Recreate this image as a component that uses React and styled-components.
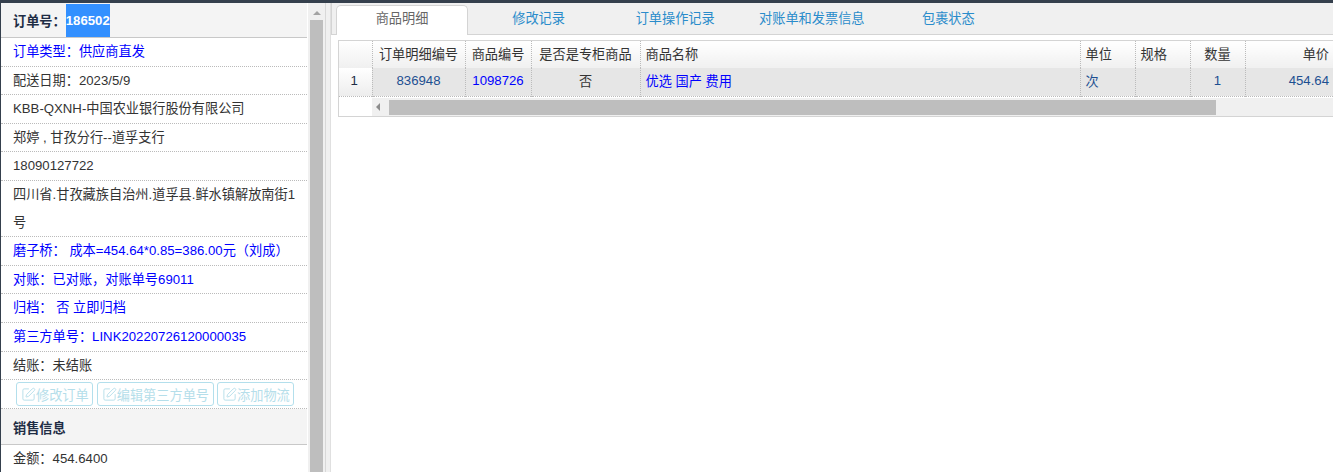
import React from "react";
import styled, { createGlobalStyle } from "styled-components";
import { SquarePen } from "lucide-react";

const Global = createGlobalStyle`
  html, body { margin: 0; padding: 0; background: #fff; }
  body { font-family: "Liberation Sans", "Noto Sans CJK SC", sans-serif; font-size: 13.2px; color: #333; }
  * { box-sizing: border-box; }
`;

const Page = styled.div`
  width: 1333px;
  height: 472px;
  display: flex;
  flex-direction: column;
  overflow: hidden;
  background: #fff;
`;
const TopStrip = styled.div`
  flex: none;
  height: 3px;
  background: #35404d;
`;
const Main = styled.div`
  flex: 1;
  display: flex;
  min-height: 0;
  border-left: 1px solid #35404d;
`;
const InfoPanel = styled.div`
  flex: none;
  width: 306px;
  overflow: hidden;
  background: #fff;
`;
const SectionHead = styled.div`
  display: flex;
  align-items: center;
  background: #f4f4f4;
  border-bottom: 1px solid #c8c8c8;
  color: #1f2d45;
  font-weight: bold;
  height: ${p => p.$h}px;
  padding: 1px 0 0 12px;
  white-space: nowrap;
`;
const Selected = styled.span`
  align-self: stretch;
  display: flex;
  align-items: center;
  background: #3390ff;
  color: #fff;
`;
const InfoRow = styled.div`
  padding: 0 11px 0 12px;
  line-height: 27.6px;
  border-bottom: 1px dotted #bbb;
  color: ${p => (p.$blue ? "#0000ff" : "#333")};
  &:last-child { border-bottom: none; }
`;
const ButtonRow = styled.div`
  display: flex;
  gap: 3.5px;
  padding: 2px 0 0 15px;
  height: 29px;
  border-bottom: 1px dotted #bbb;
`;
const FadedButton = styled.button`
  display: inline-flex;
  align-items: center;
  height: 24px;
  padding: 0 3.5px 0 4px;
  border: 1px solid #b3dfec;
  border-radius: 3px;
  background: #fff;
  color: #b5deea;
  font: inherit;
  white-space: nowrap;
`;
const VScroll = styled.div`
  flex: none;
  width: 17px;
  margin-left: 1px;
  background: #f0f0f0;
  display: flex;
  flex-direction: column;
  align-items: center;
  padding-top: 8px;
`;
const UpArrow = styled.div`
  width: 0;
  height: 0;
  border-left: 4px solid transparent;
  border-right: 4px solid transparent;
  border-bottom: 4px solid #a3a3a3;
  margin-bottom: 5px;
`;
const VThumb = styled.div`
  flex: 1;
  width: 13px;
  background: #bebebe;
`;
const Splitter = styled.div`
  flex: none;
  width: 6px;
  background: #f0f0f0;
  border-left: 1px solid #d8d8d8;
  border-right: 1px solid #e0e0e0;
`;
const Content = styled.div`
  flex: 1;
  min-width: 0;
  overflow: hidden;
  background: #fff;
`;
const TabBar = styled.div`
  height: 32px;
  background: #f0f0f0;
  border-bottom: 1px solid #d4d4d4;
  display: flex;
  gap: 4.6px;
  padding: 2px 0 0 4px;
  border-left: 1px solid #d4d4d4;
`;
const Tab = styled.div`
  flex: none;
  width: 132px;
  height: ${p => (p.$active ? "30px" : "29px")};
  line-height: ${p => (p.$active ? "26px" : "27px")};
  text-align: center;
  color: ${p => (p.$active ? "#666" : "#2a8ccb")};
  background: ${p => (p.$active ? "#fff" : "transparent")};
  border: ${p => (p.$active ? "1px solid #d4d4d4" : "none")};
  border-bottom: none;
  border-radius: 5px 5px 0 0;
`;
const GridBox = styled.div`
  margin: 5px 0 0 7px;
  width: 1100px;
  border: 1px solid #d4d4d4;
`;
const Table = styled.table`
  border-collapse: collapse;
  table-layout: fixed;
  width: 994px;
  border-bottom: 1px dotted #bbb;
`;
const HeadCell = styled.th`
  height: 27px;
  padding: 0 4px 2px ${p => (p.$align === "left" ? "5px" : "4px")};
  font-weight: normal;
  color: #333;
  white-space: nowrap;
  text-align: ${p => p.$align || "center"};
  background: linear-gradient(#fff, #f0f0f0);
  border-left: ${p => (p.$first ? "none" : "1px dotted #bbb")};
`;
const BodyCell = styled.td`
  height: 28px;
  padding: 0 4px 3px ${p => (p.$align === "left" ? "5px" : "4px")};
  white-space: nowrap;
  text-align: ${p => p.$align || "center"};
  color: ${p => (p.$blue ? "#0000ff" : p.$plain ? "#333" : "#1d4f91")};
  background: #e6e6e6;
  border-left: 1px dotted #bbb;
`;
const RowNumber = styled.td`
  height: 28px;
  padding: 0 2px 3px 0;
  text-align: center;
  color: #1f2d45;
  background: linear-gradient(#fff, #ededed);
`;
const HScroll = styled.div`
  display: flex;
  height: 18px;
  margin-top: 1px;
  padding-left: 33px;
`;
const HTrack = styled.div`
  flex: 1;
  display: flex;
  align-items: center;
  background: #f0f0f0;
  padding: 2px 0 1px 0;
`;
const LeftArrow = styled.div`
  flex: none;
  width: 0;
  height: 0;
  margin: 0 9px 0 4px;
  border-top: 4px solid transparent;
  border-bottom: 4px solid transparent;
  border-right: 4px solid #8c8c8c;
`;
const HThumb = styled.div`
  width: 827px;
  height: 100%;
  background: #bebebe;
`;

const rows = [
  { t: "订单类型：供应商直发", blue: true },
  { t: "配送日期：2023/5/9" },
  { t: "KBB-QXNH-中国农业银行股份有限公司" },
  { t: "郑婷 , 甘孜分行--道孚支行" },
  { t: "18090127722" },
  { t: "四川省.甘孜藏族自治州.道孚县.鲜水镇解放南街1号" },
  { t: "磨子桥： 成本=454.64*0.85=386.00元（刘成）", blue: true },
  { t: "对账：已对账，对账单号69011", blue: true },
  { t: "归档： 否 立即归档", blue: true },
  { t: "第三方单号：LINK20220726120000035", blue: true },
  { t: "结账：未结账" },
];
const buttons = ["修改订单", "编辑第三方单号", "添加物流"];
const tabs = ["商品明细", "修改记录", "订单操作记录", "对账单和发票信息", "包裹状态"];
const columns = [
  { w: 33 },
  { w: 93, t: "订单明细编号" },
  { w: 66, t: "商品编号" },
  { w: 109, t: "是否是专柜商品" },
  { w: 440, t: "商品名称", align: "left" },
  { w: 55, t: "单位", align: "left" },
  { w: 55, t: "规格", align: "left" },
  { w: 55, t: "数量" },
  { w: 88, t: "单价", align: "right" },
];

export default function App() {
  return (
    <Page>
      <Global />
      <TopStrip />
      <Main>
        <InfoPanel>
          <SectionHead $h={35}>
            订单号：<Selected>186502</Selected>
          </SectionHead>
          {rows.map(r => (
            <InfoRow key={r.t} $blue={r.blue}>{r.t}</InfoRow>
          ))}
          <ButtonRow>
            {buttons.map(b => (
              <FadedButton key={b}>
                <SquarePen size={15} strokeWidth={1.5} />
                {b}
              </FadedButton>
            ))}
          </ButtonRow>
          <SectionHead $h={36}>销售信息</SectionHead>
          <InfoRow>金额：454.6400</InfoRow>
        </InfoPanel>
        <VScroll>
          <UpArrow />
          <VThumb />
        </VScroll>
        <Splitter />
        <Content>
          <TabBar>
            {tabs.map((t, i) => (
              <Tab key={t} $active={i === 0}>{t}</Tab>
            ))}
          </TabBar>
          <GridBox>
            <Table>
              <colgroup>
                {columns.map((c, i) => <col key={i} width={c.w} />)}
              </colgroup>
              <thead>
                <tr>
                  {columns.map((c, i) => (
                    <HeadCell key={i} $first={i === 0} $align={c.align}>{c.t}</HeadCell>
                  ))}
                </tr>
              </thead>
              <tbody>
                <tr>
                  <RowNumber>1</RowNumber>
                  <BodyCell>836948</BodyCell>
                  <BodyCell $blue>1098726</BodyCell>
                  <BodyCell $plain>否</BodyCell>
                  <BodyCell $blue $align="left">优选 国产 费用</BodyCell>
                  <BodyCell $align="left">次</BodyCell>
                  <BodyCell />
                  <BodyCell>1</BodyCell>
                  <BodyCell $align="right">454.64</BodyCell>
                </tr>
              </tbody>
            </Table>
            <HScroll>
              <HTrack>
                <LeftArrow />
                <HThumb />
              </HTrack>
            </HScroll>
          </GridBox>
        </Content>
      </Main>
    </Page>
  );
}
